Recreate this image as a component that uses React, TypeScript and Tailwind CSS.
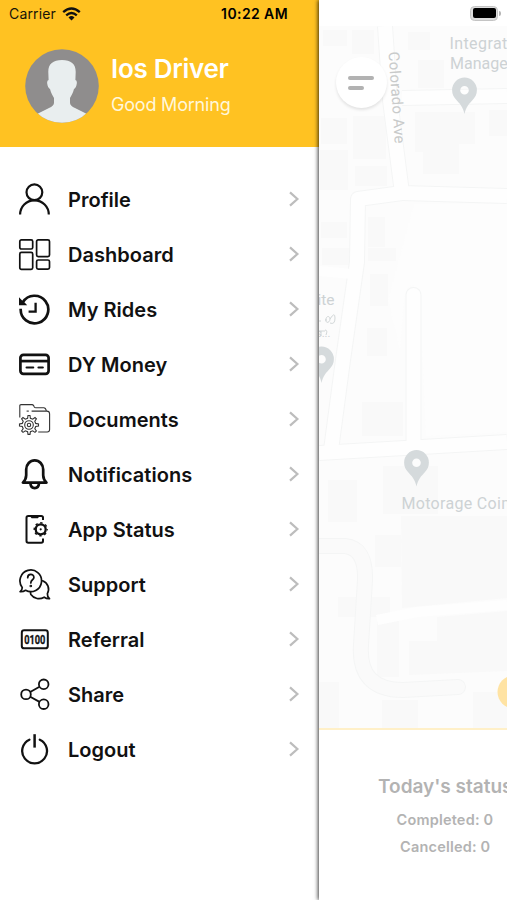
import React from "react";

type MenuItem = {
  label: string;
  icon: React.ReactNode;
};

const menuItems: MenuItem[] = [
  {
    label: "Profile",
    icon: (
      <g strokeWidth="2.2">
        <circle cx="16.4" cy="9.3" r="7.9" />
        <path d="M2.1 31.6C2.1 23.5 8.3 17.3 16.4 17.3S30.8 23.5 30.8 31.6" />
      </g>
    ),
  },
  {
    label: "Dashboard",
    icon: (
      <g strokeWidth="1.7">
        <rect x="1.8" y="1.8" width="12.9" height="9.2" rx="1.6" />
        <rect x="1.8" y="14.4" width="12.9" height="16.9" rx="1.6" />
        <rect x="18.6" y="1.8" width="12.9" height="16.9" rx="1.6" />
        <rect x="18.6" y="22" width="12.9" height="9.2" rx="1.6" />
      </g>
    ),
  },
  {
    label: "My Rides",
    icon: (
      <g strokeWidth="2.7">
        <path d="M4.8 9.2A13.8 13.8 0 1 1 2.7 15.8" />
        <path d="M17.6 9.8V18.6H10.6" strokeWidth="2.3" />
        <path d="M1 4.2V12.2H9.2L6.6 9.6L3.9 7.2Z" fill="#111" stroke="none" />
      </g>
    ),
  },
  {
    label: "DY Money",
    icon: (
      <g strokeWidth="2.7">
        <rect x="2.4" y="6.8" width="28.2" height="19" rx="3" />
        <path d="M2.3 13.1H30.7" />
        <path d="M8.6 19.5H15.2M20.5 19.5H24.8" strokeLinecap="round" strokeWidth="2.2" />
      </g>
    ),
  },
  {
    label: "Documents",
    icon: (
      <g strokeWidth="1.1" stroke="#333">
        <path d="M1.8 14.4V2.8Q1.8 1.6 3 1.6H14Q15 1.6 15.6 2.6L16.3 4Q16.8 4.8 17.8 4.8H25.8Q27.6 4.8 28.4 7.8" />
        <path d="M13.6 8.1H28.8Q31.6 8.1 31.6 11V26.6Q31.6 29 29.2 29H20.2" />
        <path d="M8.6 8.1H10.8" />
        <path d="M9.6 15.3L10 12.5H12L12.4 15.3L14.7 16.2L17 14.5L18.4 15.9L16.8 18.2L17.7 20.4L20.5 20.9V23L17.7 23.5L16.8 25.7L18.4 28L17 29.4L14.7 27.8L12.4 28.7L12 31.4H10L9.6 28.7L7.3 27.8L5 29.4L3.6 28L5.2 25.7L4.3 23.5L1.5 23V20.9L4.3 20.4L5.2 18.2L3.6 15.9L5 14.5L7.3 16.2Z" />
        <circle cx="11" cy="22" r="4.3" />
        <circle cx="11" cy="22" r="1.7" />
      </g>
    ),
  },
  {
    label: "Notifications",
    icon: (
      <g strokeWidth="2.7" strokeLinejoin="round" strokeLinecap="round">
        <path d="M4.9 24.6H28.5Q25.3 21.4 25.2 17.2V11.5A8.5 9.2 0 0 0 8.2 11.5V17.2Q8.1 21.4 4.9 24.6Z" />
        <path d="M12.4 25.4Q12.8 30.1 16.7 30.1T21 25.4" />
      </g>
    ),
  },
  {
    label: "App Status",
    icon: (
      <g strokeWidth="2">
        <path d="M25 7V4.6Q25 2.9 23.2 2.9H10.3Q8.5 2.9 8.5 4.7V28Q8.5 29.8 10.3 29.8H23.2Q25 29.8 25 28V25.4" />
        <path d="M13 3.2L14 4.4H19.5L20.5 3.2" strokeWidth="1.6" />
        <circle cx="22.7" cy="16.3" r="5" strokeWidth="2.3" />
        <circle cx="22.7" cy="16.3" r="6.5" strokeWidth="1.4" strokeDasharray="2.4 2.7" strokeDashoffset="1.2" />
        <circle cx="22.7" cy="16.3" r="1.1" fill="#111" stroke="none" />
      </g>
    ),
  },
  {
    label: "Support",
    icon: (
      <g strokeWidth="1.7" strokeLinejoin="round" strokeLinecap="round">
        <path d="M4.2 19.4A10.8 10.8 0 1 1 7.6 22.3Q5 24 2.1 23.7Q4.4 22.2 4.2 19.4Z" />
        <path d="M24.6 12.8C29.9 15 32.1 20.5 29.4 25.7Q29.2 28.9 31.5 30.7Q28.7 31 26.2 29.2C21.6 31.9 16 30.9 12.9 26.5Q12.5 25.8 12.5 24" />
        <path d="M9.7 9.7C9.7 5.3 15.9 5.4 15.9 9.4C15.9 11.9 12.8 11.7 12.8 14.9" />
        <circle cx="12.8" cy="18" r="0.5" />
      </g>
    ),
  },
  {
    label: "Referral",
    icon: (
      <g strokeWidth="2">
        <rect x="3.8" y="7.3" width="26" height="18" rx="2.4" />
        <text
          x="6.2"
          y="20.9"
          textLength="21.2"
          lengthAdjust="spacingAndGlyphs"
          fontSize="12.5"
          fontWeight="700"
          fontFamily="Roboto, sans-serif"
          fill="#111"
          stroke="#111"
          strokeWidth="0.3"
        >
          0100
        </text>
      </g>
    ),
  },
  {
    label: "Share",
    icon: (
      <g strokeWidth="1.8">
        <circle cx="8" cy="16.4" r="4.8" />
        <circle cx="25.7" cy="6.3" r="4.8" />
        <circle cx="25.7" cy="26.2" r="4.8" />
        <path d="M12.2 14L21.5 8.7M12.2 18.8L21.5 23.9" />
      </g>
    ),
  },
  {
    label: "Logout",
    icon: (
      <g strokeWidth="2.3">
        <path d="M11.4 6.7A12.4 12.4 0 1 0 21.8 6.7" strokeLinecap="round" />
        <path d="M16.6 1.2V14.6" strokeWidth="2.5" />
      </g>
    ),
  },
];

function WifiIcon() {
  return (
    <svg className="h-[14px] w-[19px]" viewBox="0 0 19 14" fill="none" stroke="#111" strokeWidth="2.4">
      <path d="M1.2 5.1Q9.5 -2.2 17.8 5.1" />
      <path d="M4.2 8.3Q9.5 3.8 14.8 8.3" />
      <path d="M9.5 13.4L6.5 10.4Q9.5 7.8 12.5 10.4Z" fill="#111" stroke="none" />
    </svg>
  );
}

function Avatar() {
  return (
    <svg className="size-[74px]" viewBox="0 0 74 74">
      <clipPath id="avatar">
        <circle cx="37" cy="37" r="36.8" />
      </clipPath>
      <g clipPath="url(#avatar)">
        <rect width="74" height="74" fill="#8f8d8d" />
        <path
          d="M37 11C28 11 23.2 15 23.3 23L23.6 31Q21.8 31.5 22.2 34.5Q22.8 38.8 25 40C26 44 27.5 46.5 29 49V54Q28.7 57 24 59L13 64.5V76H61V64.5L50 59Q45.3 57 45 54V49C46.5 46.5 48 44 49 40Q51.2 38.8 51.8 34.5Q52.2 31.5 50.4 31L50.7 23C50.8 15 46 11 37 11Z"
          fill="#e9eeef"
        />
      </g>
    </svg>
  );
}

function Pin({ x, y }: { x: number; y: number }) {
  return (
    <path
      transform={`translate(${x} ${y})`}
      d="M0 36.5C-1.5 29-5 26-8.5 22C-10.8 19.5-12.4 16.5-12.4 12.4A12.4 12.4 0 0 1 12.4 12.4C12.4 16.5 10.8 19.5 8.5 22C5 26 1.5 29 0 36.5ZM0 8.4A4.3 4.3 0 1 0 0 17A4.3 4.3 0 1 0 0 8.4Z"
      fill="#d5dadc"
      fillRule="evenodd"
    />
  );
}

function StreetMap() {
  return (
    <svg className="block h-[702px] w-[188px]" viewBox="319 26 188 702" fontFamily="Roboto, sans-serif">
      <rect x="319" y="26" width="188" height="702" fill="#fcfcfc" />

      {/* Buildings */}
      <g fill="#f9f9f9">
        <path d="M323 30h24v16h-24zM352 30h22v24h-22zM418 60h26v28h-26zM408 32h22v18h-22z" />
        <path d="M321 118h26v26h-26zM353 116h33v43h-33zM355 166h32v20h-32zM320 150h28v40h-28z" />
        <path d="M415 112h60v32h-16v30h-36v-22h-8zM489 110h18v26h-18z" />
        <path d="M321 222h26v16h-26zM322 248h28v17h-28zM368 217h17v30h-17zM368 248h28v13h-28zM370 274h18v32h-18zM367 328h20v28h-20z" />
        <path d="M362 402h41v34h-41zM435 388h12v45h-12zM463 392h25v37h-25z" />
        <path d="M328 480h29v42h-29zM383 466h55v48h-55zM375 535h26v32h-26z" />
        <path d="M401 516h106v82l-105 10zM437 617l70-6v60l-98 4v-34h28zM377 621h22v56h-22z" />
        <path d="M319 682h20v46h-20zM382 700h36v28h-36zM473 692h34v36h-34zM338 597h52v20h-52z" />
      </g>

      {/* Open ground */}
      <path d="M414 204L507 204V432L426 436L420 300Q412 270 404 300L400 350L388 300Z" fill="#fdfdfd" />

      {/* Roads */}
      <g fill="none" stroke="#f4f5f5" strokeWidth="16" strokeLinejoin="round">
        <path d="M385 26L390 100L402 193L507 196" />
        <path d="M402 193L358 199L357 262L343 360L331 450" />
        <path d="M402 98L507 96" />
        <path d="M413.5 445V295" strokeLinecap="round" />
        <path d="M319 453L507 442" />
        <path d="M319 546H345Q366 548 365 580L361 645Q358 690 403 690L458 687" strokeLinecap="round" />
      </g>
      <g fill="none" stroke="#fefefe" strokeWidth="14" strokeLinejoin="round">
        <path d="M385 26L390 100L402 193L507 196" />
        <path d="M402 193L358 199L357 262L343 360L331 450" />
        <path d="M402 98L507 96" />
        <path d="M413.5 445V295" strokeLinecap="round" />
        <path d="M319 453L507 442" />
        <path d="M319 546H345Q366 548 365 580L361 645Q358 690 403 690L458 687" stroke="#fafafa" strokeLinecap="round" />
      </g>
      <path d="M319 271L352 274M377 620L417 612L507 605" stroke="#fefefe" strokeWidth="10" fill="none" />

      {/* Places */}
      <g fill="#cdd2d4" fontSize="16">
        <text x="449.5" y="48.5" letterSpacing="0.4">
          Integrated
        </text>
        <text x="450" y="68.5">
          Management
        </text>
        <text x="401.5" y="508.5" textLength="123">
          Motorage Coimb
        </text>
        <text x="309.5" y="305" fontSize="15.5">
          site
        </text>
        <text x="316" y="337" fontSize="11">
          s...
        </text>
      </g>
      <g fill="none" stroke="#cdd2d4" strokeWidth="0.9">
        <path d="M326 321C325 316 330 315 330 319S325 324 326 319M330 319Q335 311 335 318T330 323M319 321H321" />
        <path d="M319 331H325M321 331V336M325 330Q328 330 326 335" />
      </g>
      <text transform="translate(388.5 52) rotate(86)" fontSize="15" fill="#c8caca" textLength="92">
        Colorado Ave
      </text>
      <Pin x={464.5} y={77.5} />
      <Pin x={416.5} y={450} />
      <Pin x={321.5} y={346.5} />
      <circle cx="514" cy="692" r="16.5" fill="#ffe3a3" />
    </svg>
  );
}

function Sidebar() {
  return (
    <aside className="flex w-[319px] shrink-0 flex-col bg-white">
      <header className="h-[147px] bg-[#ffc222]">
        <div className="flex h-[27px] items-center pl-[9px] text-[14px] text-[#171408]">
          <span className="w-[53px] tracking-[0.15px]">Carrier</span>
          <WifiIcon />
          <span className="ml-auto pr-[31px] text-[14px] font-semibold tracking-[0.4px] whitespace-nowrap text-black">
            10:22 AM
          </span>
        </div>
        <div className="flex pt-[22px] pl-[25px]">
          <Avatar />
          <div className="pl-3 text-white">
            <h1 className="pt-[4px] text-[26px] leading-[32px] font-semibold tracking-[-0.3px]">Ios Driver</h1>
            <p className="pt-[8px] text-[18px] leading-[24px] tracking-[-0.2px] text-[#fff7db]">Good Morning</p>
          </div>
        </div>
      </header>

      <nav className="pt-[25px]">
        {menuItems.map((item) => (
          <a key={item.label} className="flex h-[55px] items-center pr-[19px] pl-[18px]">
            <svg className="size-[33px]" viewBox="0 0 33 33" fill="none" stroke="#111">
              {item.icon}
            </svg>
            <span className="ml-[17px] flex-1 text-[20px] font-semibold tracking-[0.03px] text-[#111]">
              {item.label}
            </span>
            <svg className="mb-px h-[16px] w-[12px]" viewBox="0 0 12 16" fill="none" stroke="#bdbdbd" strokeWidth="2.2">
              <path d="M2 1.4L9.4 8L2 14.6" />
            </svg>
          </a>
        ))}
      </nav>
    </aside>
  );
}

// Home screen pushed to the right while the drawer is open
function Home() {
  return (
    <main className="z-10 w-[188px] shrink-0 bg-white shadow-[-1px_0_4px_rgba(0,0,0,0.75)]">
      <div className="flex h-[26px] items-center pl-[151px]">
        <div className="h-[15px] w-[28px] rounded-[4.5px] border-[1.5px] border-[#c4c4c4] bg-[#dedede] p-[1.5px]">
          <div className="h-full rounded-[2px] bg-black" />
        </div>
        <div className="ml-px h-[5px] w-[2px] rounded-r-full bg-[#b5b5b5]" />
      </div>
      <div className="relative">
        <StreetMap />
        <button className="absolute top-[31px] left-[17px] flex size-[51px] flex-col justify-center gap-[6px] rounded-full bg-white pl-[12px] shadow-[0_2px_3px_rgba(0,0,0,0.1)]">
          <span className="h-[4px] w-[26px] rounded-full bg-[#b2b2b2]" />
          <span className="h-[4px] w-[16px] rounded-full bg-[#b2b2b2]" />
        </button>
      </div>
      <section className="h-[172px] border-t-2 border-[#fff0c8] pl-[59px] whitespace-nowrap text-[#b3b3b3]">
        <h2 className="pt-[43px] text-[19px] leading-[28px] font-semibold">Today's status</h2>
        <p className="pt-[9px] pl-[18.5px] text-[14.5px] leading-[20px] font-semibold tracking-[0.2px]">Completed: 0</p>
        <p className="pt-[7px] pl-[22px] text-[14.5px] leading-[20px] font-semibold tracking-[0.2px]">Cancelled: 0</p>
      </section>
    </main>
  );
}

export default function App() {
  return (
    <div className="flex h-[900px] w-[507px] overflow-hidden bg-white font-['Inter',sans-serif]">
      <Sidebar />
      <Home />
    </div>
  );
}
